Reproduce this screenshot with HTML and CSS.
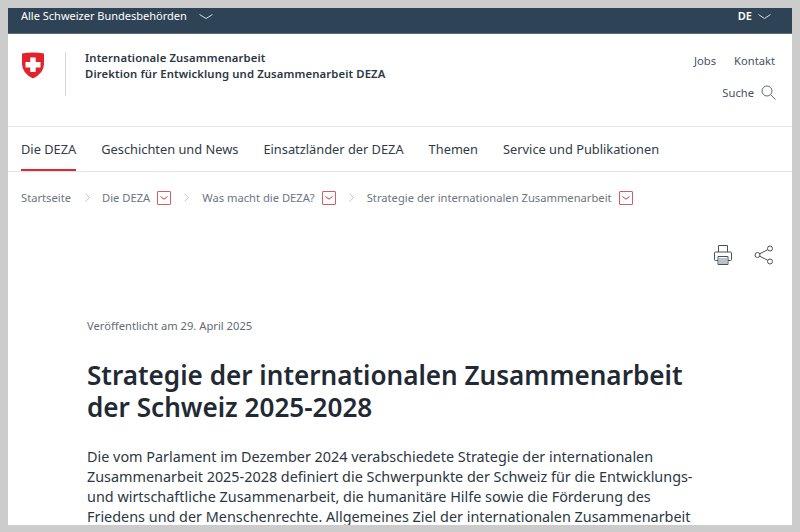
FILE: index.html
```html
<!DOCTYPE html>
<html lang="de">
<head>
<meta charset="utf-8">
<title>Strategie der internationalen Zusammenarbeit</title>
<link rel="stylesheet" href="styles.css">
</head>
<body>
<div class="page">
  <div class="topbar">
    <div class="topbar-item">Alle Schweizer Bundesbehörden
      <svg class="chev-top" width="14" height="6" viewBox="0 0 14 6"><path d="M.5.5 7 4.500 13.500.5" fill="none" stroke="#d5dce2" stroke-width="1"/></svg>
    </div>
    <div class="topbar-item lang">DE
      <svg class="chev-top" width="13" height="6" viewBox="0 0 13 6"><path d="M.5.5 6.500 4.500 12.500.5" fill="none" stroke="#d5dce2" stroke-width="1"/></svg>
    </div>
  </div>
  <header class="header">
    <div class="brand">
      <svg class="crest" width="24" height="27" viewBox="0 0 24 27"><path d="M1 1.500Q6 .5 12 .5T23 1.500V12Q23 21 12 26.500 1 21 1 12Z" fill="#e1242b"/><path d="M9.300 5.500h5.400v4.500h4.800v5.400h-4.800v4.500H9.300v-4.500H4.500V10h4.800Z" fill="#fff"/></svg>
      <span class="divider"></span>
      <div class="brand-text">
        <div>Internationale Zusammenarbeit</div>
        <div>Direktion für Entwicklung und Zusammenarbeit DEZA</div>
      </div>
    </div>
    <div class="meta">
      <div class="meta-row"><a>Jobs</a><a>Kontakt</a></div>
      <div class="meta-row search"><a>Suche</a>
        <svg width="15" height="15" viewBox="0 0 15 15"><circle cx="6" cy="6" r="5" fill="none" stroke="#5f6b76"/><path d="m9.500 9.500 5 5" stroke="#5f6b76" fill="none"/></svg>
      </div>
    </div>
  </header>
  <nav class="nav">
    <a class="active">Die DEZA</a>
    <a>Geschichten und News</a>
    <a>Einsatzländer der DEZA</a>
    <a>Themen</a>
    <a>Service und Publikationen</a>
  </nav>
  <div class="crumbs">
    <span class="crumb">Startseite</span>
    <svg class="sep first" width="5" height="9" viewBox="0 0 5 9"><path d="m.5.5 4 4-4 4" fill="none" stroke="#c4c9ce"/></svg>
    <span class="crumb">Die DEZA</span>
    <span class="drop"><svg width="8" height="4" viewBox="0 0 8 4"><path d="m.5.500 3.500 2.700L7.500.5" fill="none" stroke="#d8333f"/></svg></span>
    <svg class="sep" width="5" height="9" viewBox="0 0 5 9"><path d="m.5.5 4 4-4 4" fill="none" stroke="#c4c9ce"/></svg>
    <span class="crumb">Was macht die DEZA?</span>
    <span class="drop"><svg width="8" height="4" viewBox="0 0 8 4"><path d="m.5.500 3.500 2.700L7.500.5" fill="none" stroke="#d8333f"/></svg></span>
    <svg class="sep" width="5" height="9" viewBox="0 0 5 9"><path d="m.5.5 4 4-4 4" fill="none" stroke="#c4c9ce"/></svg>
    <span class="crumb">Strategie der internationalen Zusammenarbeit</span>
    <span class="drop"><svg width="8" height="4" viewBox="0 0 8 4"><path d="m.5.500 3.500 2.700L7.500.5" fill="none" stroke="#d8333f"/></svg></span>
  </div>
  <div class="tools">
    <svg width="18" height="20" viewBox="0 0 18 20" fill="none" stroke="#46535f"><path d="M4.500 7V.5h9V7"/><path d="M4 15.500H1.500a1 1 0 0 1-1-1V8a1 1 0 0 1 1-1h15a1 1 0 0 1 1 1v6.500a1 1 0 0 1-1 1H14"/><path d="M4 11.500h10v8H4z"/><path d="M5 14h8M5 16h8M5 18h8" stroke="#7b8690"/></svg>
    <svg width="20" height="20" viewBox="0 0 20 20" fill="none" stroke="#46535f"><circle cx="3.500" cy="10" r="2.500"/><circle cx="16" cy="3.500" r="2.500"/><circle cx="16" cy="16.500" r="2.500"/><path d="m5.700 8.800 8-4.100M5.700 11.200l8 4.100"/></svg>
  </div>
  <main class="content">
    <p class="date">Veröffentlicht am 29. April 2025</p>
    <h1>Strategie der internationalen Zusammenarbeit der Schweiz 2025-2028</h1>
    <p class="lead">Die vom Parlament im Dezember 2024 verabschiedete Strategie der internationalen Zusammenarbeit 2025-2028 definiert die Schwerpunkte der Schweiz für die Entwicklungs- und wirtschaftliche Zusammenarbeit, die humanitäre Hilfe sowie die Förderung des Friedens und der Menschenrechte. Allgemeines Ziel der internationalen Zusammenarbeit</p>
  </main>
</div>
</body>
</html>
```
FILE: styles.css
```css
* { box-sizing: border-box; }
html, body { margin: 0; height: 532px; overflow: hidden; }
body { background: #cccccc; padding: 8px 8px 7px; font-family: "Noto Sans", sans-serif; }
.page { background: #fff; height: 517px; overflow: hidden; color: #2b3743; }
.topbar { height: 26px; background: #2f4356; border-bottom: 1px solid #5d6e7d; color: #fff; display: flex; justify-content: space-between; padding: 0 21px 0 13px; font-size: 11px; line-height: 16px; }
.topbar-item { display: flex; align-items: flex-start; gap: 12px; }
.chev-top { margin-top: 6px; }
.lang { font-weight: 600; gap: 6px; }
.header { height: 93px; border-bottom: 1px solid #e3e5e8; display: flex; justify-content: space-between; padding: 16px 17px 0 13px; }
.brand { display: flex; align-items: flex-start; }
.crest { margin-top: 2px; }
.divider { width: 1px; height: 44px; background: #d5d8db; margin: 2px 19px 0 20px; }
.brand-text { font-size: 11.300px; font-weight: 600; line-height: 16px; letter-spacing: .12px; }
.meta { display: flex; flex-direction: column; align-items: flex-end; font-size: 11.200px; color: #46535f; line-height: 16px; padding-top: 3px; }
.meta-row { display: flex; gap: 18px; }
.search { margin-top: 16px; gap: 7px; }
.search svg { margin-right: -1px; }
.nav { height: 45px; border-bottom: 1px solid #e3e5e8; display: flex; gap: 25px; padding: 0 13px; font-size: 12.820px; line-height: 44px; color: #2f3b47; }
.nav a { display: block; height: 44px; }
.nav .active { border-bottom: 2px solid #dc2a32; }
.crumbs { display: flex; align-items: center; height: 51px; padding: 0 13px; font-size: 11.200px; color: #6b7680; }
.sep { margin: 0 13px 0 13px; }
.sep.first { margin: 0 12px 0 14px; }
.drop { width: 14px; height: 14px; border: 1px solid #c8616a; border-radius: 1px; margin-left: 7px; display: flex; align-items: center; justify-content: center; }
.tools { display: flex; justify-content: flex-end; gap: 22px; align-items: center; padding-right: 18px; margin-top: 22px; height: 20px; }
.content { padding: 0 96px 0 79px; }
.date { margin: 53px 0 0; font-size: 11.200px; line-height: 16px; color: #5f6b76; }
h1 { margin: 25px 0 0; font-size: 26.100px; line-height: 32px; font-weight: 600; color: #1f2a35; }
.lead { margin: 24px 0 0; font-size: 14.400px; line-height: 20px; color: #2b3743; }
```
